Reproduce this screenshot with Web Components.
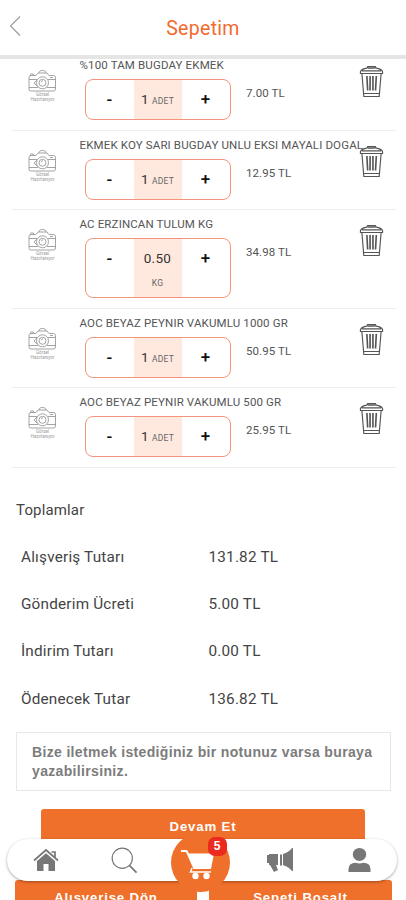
<!DOCTYPE html>
<html lang="tr">
<head>
<meta charset="utf-8">
<meta name="viewport" content="width=device-width, initial-scale=1">
<title>Sepetim</title>
<style>
  body {
    margin: 0;
    background: #fff;
    font-family: Roboto, "Liberation Sans", sans-serif;
    color: #444;
  }
</style>
</head>
<body>
<cart-page>
  <page-header slot="header">Sepetim</page-header>
  <cart-item name="%100 TAM BUGDAY EKMEK" amount="1" unit="ADET" price="7.00 TL"></cart-item>
  <cart-item name="EKMEK KOY SARI BUGDAY UNLU EKSI MAYALI DOGAL" amount="1" unit="ADET" price="12.95 TL"></cart-item>
  <cart-item name="AC ERZINCAN TULUM KG" amount="0.50" unit="KG" price="34.98 TL"></cart-item>
  <cart-item name="AOC BEYAZ PEYNIR VAKUMLU 1000 GR" amount="1" unit="ADET" price="50.95 TL"></cart-item>
  <cart-item name="AOC BEYAZ PEYNIR VAKUMLU 500 GR" amount="1" unit="ADET" price="25.95 TL"></cart-item>
  <cart-totals slot="totals">
    <span slot="title">Toplamlar</span>
    <total-row label="Alışveriş Tutarı">131.82 TL</total-row>
    <total-row label="Gönderim Ücreti">5.00 TL</total-row>
    <total-row label="İndirim Tutarı">0.00 TL</total-row>
    <total-row label="Ödenecek Tutar">136.82 TL</total-row>
  </cart-totals>
  <note-box slot="actions">Bize iletmek istediğiniz bir notunuz varsa buraya yazabilirsiniz.</note-box>
  <action-button slot="actions" class="main">Devam Et</action-button>
  <action-button slot="secondary">Alışverişe Dön</action-button>
  <action-button slot="secondary">Sepeti Boşalt</action-button>
  <tab-bar slot="nav" count="5"></tab-bar>
</cart-page>

<script>
class BaseElement extends HTMLElement {
  constructor() {
    super();
    this.attachShadow({mode: 'open'});
  }

  connectedCallback() {
    this.shadowRoot.innerHTML = `<style>${this.style_}</style>${this.template}`;
  }
}

class CartPage extends BaseElement {
  get style_() {
    return `
      :host {
        display: flex;
        flex-direction: column;
        position: relative;
        height: 900px;
        overflow: hidden;
      }
      .items { padding: 0 10px 0 12px; margin-top: -8px; }
      .actions { display: flex; flex-direction: column; padding: 0 15px 0 16px; }
      .actions ::slotted(.main) { margin: 18px 26px 0 25px; }
      .secondary {
        display: grid;
        grid-template-columns: 182px 183px;
        gap: 12px;
        margin: 35px 0 0 15px;
      }
    `;
  }

  get template() {
    return `
      <slot name="header"></slot>
      <div class="items"><slot></slot></div>
      <slot name="totals"></slot>
      <div class="actions"><slot name="actions"></slot></div>
      <div class="secondary"><slot name="secondary"></slot></div>
      <slot name="nav"></slot>
    `;
  }
}

class PageHeader extends BaseElement {
  get style_() {
    return `
      :host {
        display: grid;
        grid-template-columns: 40px 1fr 40px;
        flex: none;
        height: 59px;
        box-sizing: border-box;
        border-bottom: 4px solid #e5e5e5;
        background: #fff;
        position: relative;
        z-index: 1;
      }
      svg { margin: 15px 0 0 9px; }
      h1 {
        margin: 0;
        text-align: center;
        font-size: 19.5px;
        font-weight: 400;
        line-height: 57px;
        letter-spacing: 0.3px;
        color: #f26a2e;
      }
    `;
  }

  get template() {
    return `
      <svg width="13" height="22" viewBox="0 0 13 22"><path d="M11 1.5 1.5 11 11 20.5" fill="none" stroke="#999" stroke-width="1.1"/></svg>
      <h1><slot></slot></h1>
    `;
  }
}

class QuantityStepper extends BaseElement {
  get style_() {
    return `
      :host {
        display: grid;
        grid-template-columns: 1fr 48px 1fr;
        box-sizing: border-box;
        width: 146px;
        height: 41px;
        border: 1px solid #f2957c;
        border-radius: 8px;
        overflow: hidden;
        line-height: 39px;
        text-align: center;
      }
      :host([unit="KG"]) { height: 60px; }
      b { font-size: 17px; color: #111; font-weight: 500; }
      .value {
        background: #ffe9df;
        font-size: 13.5px;
        line-height: 38px;
        color: #333;
        white-space: nowrap;
      }
      .value small { font-size: 8.5px; color: #666; letter-spacing: 0.2px; }
      :host([unit="KG"]) .value { letter-spacing: 0.3px; }
      :host([unit="KG"]) small { display: block; line-height: 12px; }
    `;
  }

  get template() {
    return `
      <b>-</b>
      <div class="value">${this.getAttribute('amount')} <small>${this.getAttribute('unit')}</small></div>
      <b>+</b>
    `;
  }
}

class CartItem extends BaseElement {
  get style_() {
    return `
      :host {
        display: grid;
        grid-template-columns: 67.5px 166.5px 1fr 37px;
        box-sizing: border-box;
        height: 79.5px;
        border-bottom: 1px solid #eee;
      }
      :host([unit="KG"]) { height: 98.5px; }
      .photo { padding: 18px 0 0 15px; }
      .info { white-space: nowrap; }
      .name {
        font-size: 11.5px;
        line-height: 14px;
        margin: 7px 0 7px;
        color: #555;
        letter-spacing: 0.14px;
      }
      quantity-stepper { margin-left: 5px; }
      .price { font-size: 11.5px; line-height: 14px; padding-top: 35px; color: #555; letter-spacing: 0.08px; }
      .trash { padding: 14px 0 0 0; }
      svg { display: block; }
    `;
  }

  get template() {
    return `
      <div class="photo">
        <svg width="31" height="35" viewBox="0 0 31 35" fill="none" stroke="#999" stroke-width=".9">
          <path d="M3 6.5h6l2-2.5h1c0-1.5 1-2.5 3.5-2.5s3.5 1 3.5 2.5h1l2 2.5h4.5q2 0 2 2v11.5q0 2-2 2H4q-2 0-2-2V8.5q0-2 2-2zM3.5 5.5V5h3v1M2 10.5h8M21 10.5h7.5M2 18.5h9M20 18.5h8.5M12 4h7M23 8.5h3"/>
          <circle cx="15.5" cy="13.8" r="6"/>
          <circle cx="15.5" cy="13.8" r="3.5"/>
          <path d="m7 14 3-3M7 14l3 3M14 13l2-1.5"/>
          <text x="15.5" y="27" text-anchor="middle" font-size="4.5" fill="#999" stroke="none">Görsel</text>
          <text x="15.5" y="31.5" text-anchor="middle" font-size="4.5" fill="#999" stroke="none">Hazırlanıyor</text>
        </svg>
      </div>
      <div class="info">
        <div class="name">${this.getAttribute('name')}</div>
        <quantity-stepper amount="${this.getAttribute('amount')}" unit="${this.getAttribute('unit')}"></quantity-stepper>
      </div>
      <div class="price">${this.getAttribute('price')}</div>
      <div class="trash">
        <svg width="25" height="34" viewBox="0 0 26 34" preserveAspectRatio="none" fill="none" stroke="#555" stroke-width="1.2">
          <path d="M1.5 8.5V6.5Q3 4 8 3.2L9 1.6h8l1 1.6q5 .8 6.5 3.3v2zM3 5.8h20M9 3.2h8"/>
          <path d="m3 8.5 2 23h16l2-23M5 28.5h16"/>
          <path d="m8.2 11 .8 14.500M11.5 11v14.500M14.5 11v14.500M18 11l-.8 14.500" stroke-width="1.7"/>
        </svg>
      </div>
    `;
  }
}

class CartTotals extends BaseElement {
  get style_() {
    return `
      :host { display: block; padding: 32px 16px 10px; flex: none; }
      .title { font-size: 15px; line-height: 20px; letter-spacing: 0.15px; margin-bottom: 13.5px; }
    `;
  }

  get template() {
    return `
      <div class="title"><slot name="title"></slot></div>
      <slot></slot>
    `;
  }
}

class TotalRow extends BaseElement {
  get style_() {
    return `
      :host {
        display: grid;
        grid-template-columns: 187.5px 1fr;
        padding-left: 5px;
        height: 47.3px;
        align-items: center;
        font-size: 15.3px;
        letter-spacing: 0.2px;
        color: #444;
      }
    `;
  }

  get template() {
    return `<span>${this.getAttribute('label')}</span><span><slot></slot></span>`;
  }
}

class NoteBox extends BaseElement {
  get style_() {
    return `
      :host {
        display: block;
        box-sizing: border-box;
        height: 59px;
        padding: 9.5px 14px 0 15px;
        border: 1px solid #e8e8e8;
        font: bold 14px/19px "Liberation Sans", sans-serif;
        letter-spacing: 0.34px;
        color: #7c7c7c;
      }
    `;
  }

  get template() {
    return `<slot></slot>`;
  }
}

class ActionButton extends BaseElement {
  get style_() {
    return `
      :host {
        display: block;
        height: 36px;
        border-radius: 3px;
        background: #ef702b;
        color: #fff;
        font: bold 13.2px/36px "Liberation Sans", sans-serif;
        letter-spacing: 0.85px;
        text-align: center;
      }
    `;
  }

  get template() {
    return `<slot></slot>`;
  }
}

class TabBar extends BaseElement {
  get style_() {
    return `
      :host {
        position: absolute;
        left: 7px;
        top: 839px;
        width: 390px;
        height: 42px;
        border-radius: 21px;
        background: #fff;
        box-shadow: 0 1px 3px rgba(0, 0, 0, .35);
        display: grid;
        grid-template-columns: 78px 78px 74px 86px 72px;
        align-items: center;
        justify-items: center;
      }
      .cart {
        width: 59px;
        height: 59px;
        border-radius: 50%;
        background: #ef702b;
        position: relative;
        margin: -10px 0 -14px;
      }
      .cart svg { margin: 16px 0 0 9px; }
      .badge {
        position: absolute;
        right: 3px;
        top: 4px;
        width: 19px;
        height: 19px;
        border-radius: 7px;
        background: #eb2a20;
        color: #fff;
        font: bold 12px/19px "Liberation Sans", sans-serif;
        text-align: center;
      }
      svg { display: block; }
    `;
  }

  get template() {
    return `
      <svg width="26" height="26" viewBox="0 0 26 26" fill="#777">
        <path d="m13 6.2 9 7.8v10h-6.5v-7h-5v7H4V14z"/>
        <path d="M1 13.5 13 3l12 10.5M18.5 5H22v5.5" fill="none" stroke="#777" stroke-width="1.7"/>
      </svg>
      <svg width="27" height="27" viewBox="0 0 28 28" fill="none" stroke="#777">
        <circle cx="11.7" cy="11.7" r="10.5" stroke-width="1.2"/>
        <path d="m19 19 7.5 7.5" stroke-width="1.8"/>
      </svg>
      <div class="cart">
        <svg width="36" height="32" viewBox="0 0 36 32" fill="#fff">
          <path d="M1 1h6l2 3.5h25L31 20H13.5L6 3H1z"/>
          <path d="m12 19-1.5 4H31" fill="none" stroke="#fff" stroke-width="1.5"/>
          <circle cx="15.5" cy="27" r="3.2"/>
          <circle cx="26.5" cy="27" r="3.2"/>
        </svg>
        <span class="badge">${this.getAttribute('count')}</span>
      </div>
      <svg width="28" height="26" viewBox="0 0 28 26" fill="#777">
        <path d="M1 8h2V7h9v11h-2l2 5-4 2-4-7H3v-2H1zM14 7.5h2v11h-2zM17 7q6-2 9-6h1v23h-1q-3-4-9-6z"/>
      </svg>
      <svg width="23" height="26" viewBox="0 0 24 28" preserveAspectRatio="none" fill="#777">
        <circle cx="12" cy="8" r="7"/>
        <path d="M.5 27v-3q0-7 7.5-7 4 1.5 8 0 7.5 0 7.5 7v3z"/>
      </svg>
    `;
  }
}

customElements.define('cart-page', CartPage);
customElements.define('page-header', PageHeader);
customElements.define('quantity-stepper', QuantityStepper);
customElements.define('cart-item', CartItem);
customElements.define('cart-totals', CartTotals);
customElements.define('total-row', TotalRow);
customElements.define('note-box', NoteBox);
customElements.define('action-button', ActionButton);
customElements.define('tab-bar', TabBar);
</script>
</body>
</html>
